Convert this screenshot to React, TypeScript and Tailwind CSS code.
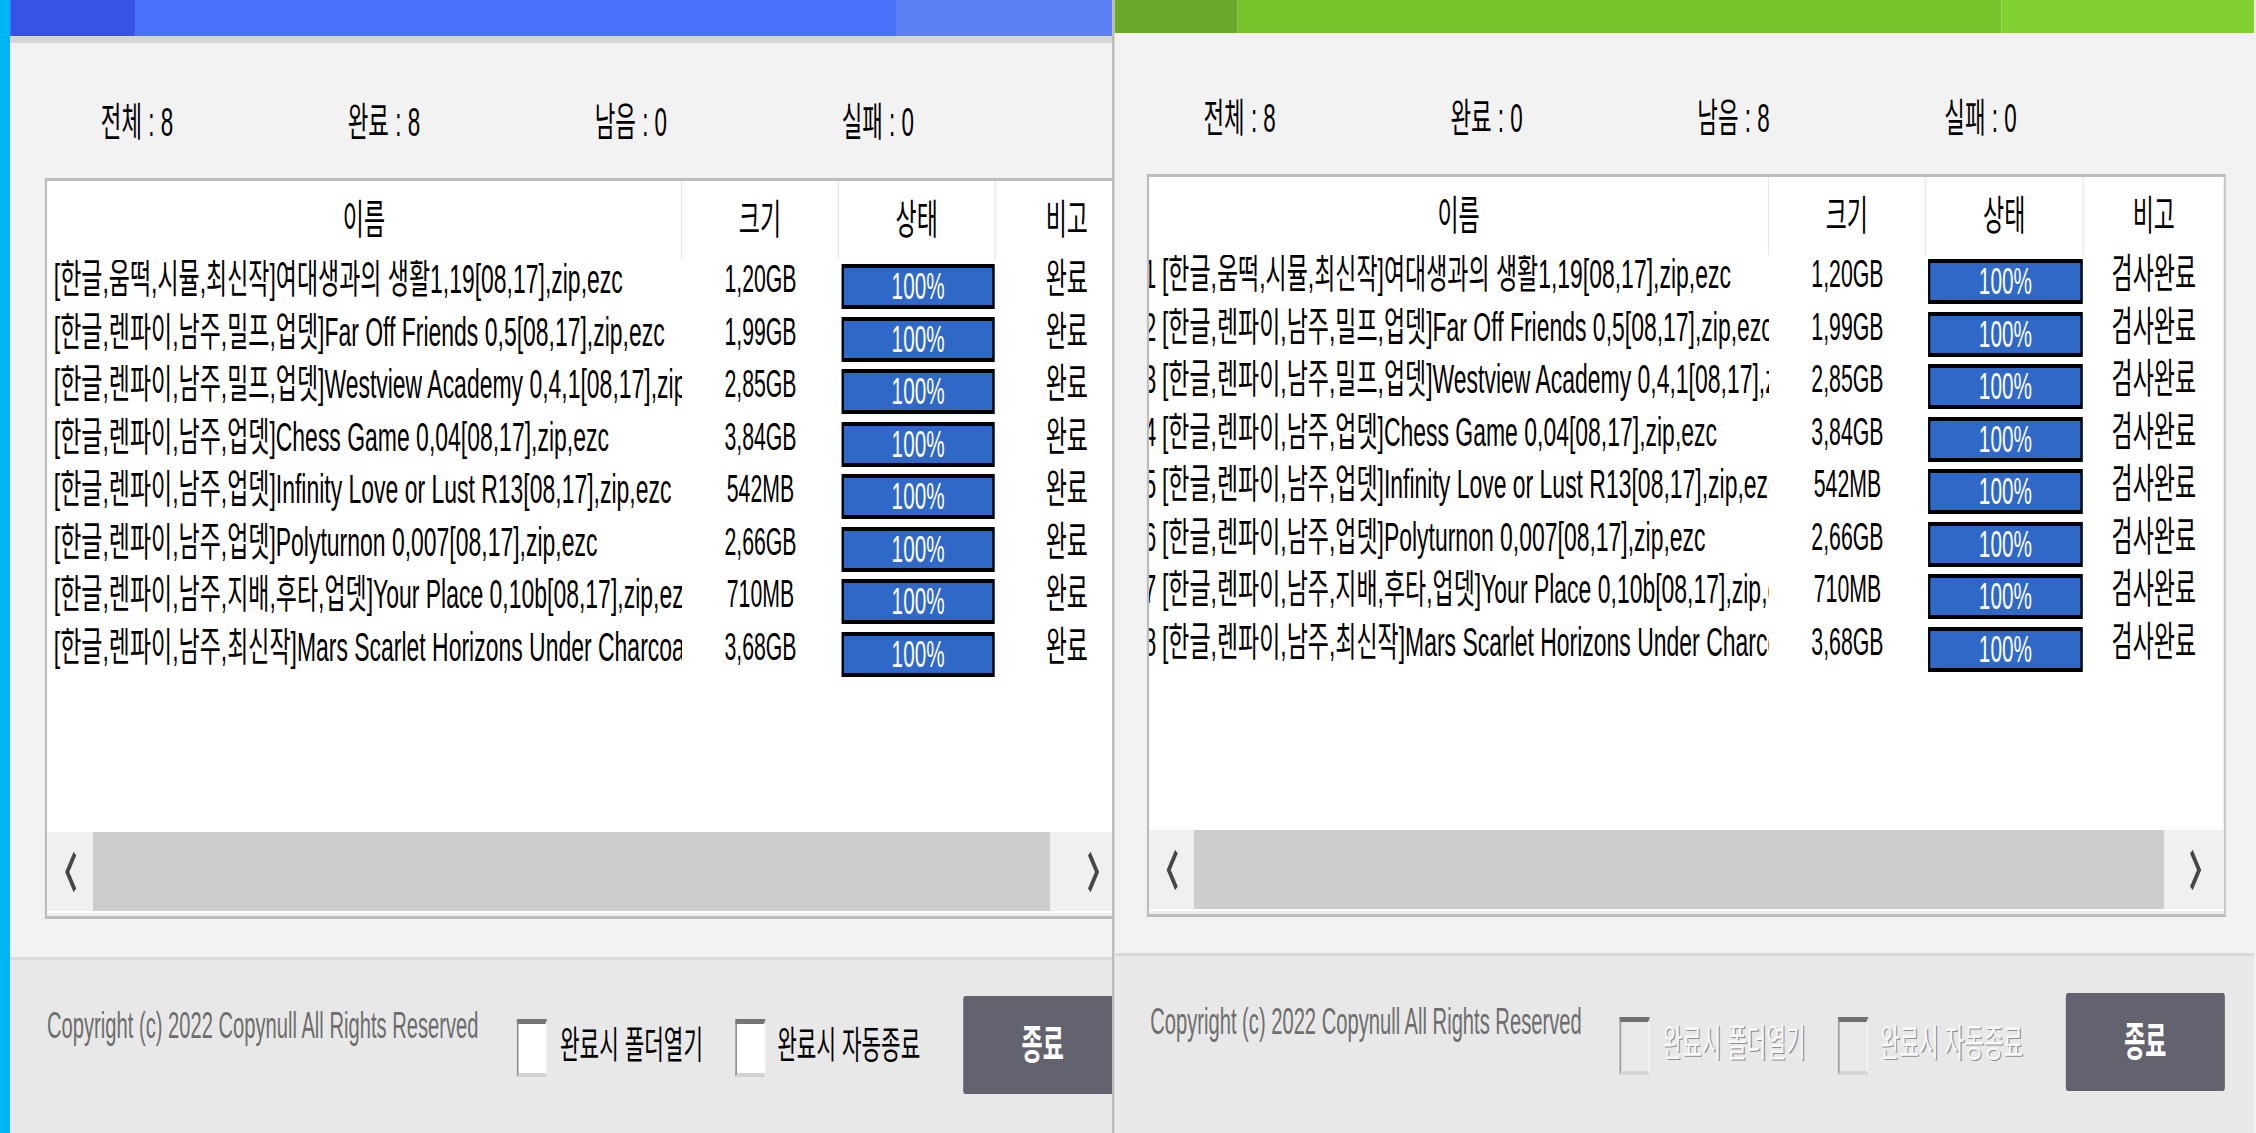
import type { ReactNode } from "react";

// The screenshot is squeezed horizontally, so the page is laid out wide and
// scaled on x by 0.56 as a whole. All widths below are in that wide space.

interface FileRow {
  name: string;
  size: string;
}

const files: FileRow[] = [
  { name: "[한글,움떡,시뮬,최신작]여대생과의 생활1,19[08,17],zip,ezc", size: "1,20GB" },
  { name: "[한글,렌파이,남주,밀프,업뎃]Far Off Friends 0,5[08,17],zip,ezc", size: "1,99GB" },
  { name: "[한글,렌파이,남주,밀프,업뎃]Westview Academy 0,4,1[08,17],zip,ezc", size: "2,85GB" },
  { name: "[한글,렌파이,남주,업뎃]Chess Game 0,04[08,17],zip,ezc", size: "3,84GB" },
  { name: "[한글,렌파이,남주,업뎃]Infinity Love or Lust R13[08,17],zip,ezc", size: "542MB" },
  { name: "[한글,렌파이,남주,업뎃]Polyturnon 0,007[08,17],zip,ezc", size: "2,66GB" },
  { name: "[한글,렌파이,남주,지배,후타,업뎃]Your Place 0,10b[08,17],zip,ezc", size: "710MB" },
  { name: "[한글,렌파이,남주,최신작]Mars Scarlet Horizons Under Charcoal Skies[08,17],zip,ezc", size: "3,68GB" },
];

function Chevron({ dir }: { dir: "left" | "right" }) {
  return (
    <svg width="27" height="40" viewBox="0 0 27 40" fill="none" stroke="#474747" strokeWidth="6" strokeLinecap="square">
      {dir === "left" ? <polyline points="20,4 8,20 20,36" /> : <polyline points="7,4 19,20 7,36" />}
    </svg>
  );
}

function Checkbox({ disabled }: { disabled?: boolean }) {
  return disabled ? (
    <div className="h-[58px] w-[54px] shrink-0 border-t-[5px] border-r-[3px] border-b-[4px] border-l-[3px] border-t-[#6f6f6f] border-r-[#f2f2f2] border-b-[#d6d6d6] border-l-[#9c9c9c] bg-[#e9e9e9]" />
  ) : (
    <div className="h-[58px] w-[54px] shrink-0 border-t-[5px] border-r-[3px] border-b-[4px] border-l-[3px] border-t-[#757575] border-r-[#f6f6f6] border-b-[#d2d2d2] border-l-[#8c8c8c] bg-white" />
  );
}

function Label({ children, disabled, className }: { children: ReactNode; disabled?: boolean; className: string }) {
  return (
    <span
      className={
        (disabled ? "text-[#f8f8f8] [text-shadow:2px_1px_0_#8f8f8f] " : "text-black ") +
        "shrink-0 whitespace-nowrap text-[38px] leading-[40px] " +
        className
      }
    >
      {children}
    </span>
  );
}

function FileTable({ right }: { right?: boolean }) {
  const nameCls = right ? "w-[1107px]" : "w-[1134px]";
  return (
    <div
      className={
        (right ? "ml-[58px] h-[743px] w-[1927px] border-r-[#c9c9c9] " : "ml-[62px] h-[741px] w-[1956px] ") +
        "flex shrink-0 flex-col border-x-[4px] border-t-[3px] border-b-[3px] border-[#bcbcbc] bg-white"
      }
    >
      <div className={(right ? "h-[78px] " : "h-[79px] ") + "flex shrink-0 text-[41px] leading-none text-black"}>
        <div className={nameCls + " flex items-center justify-center border-r-2 border-[#e4e4e4]"}>이름</div>
        <div className="flex w-[280px] items-center justify-center border-r-2 border-[#e4e4e4]">크기</div>
        <div className={(right ? "w-[282px] " : "w-[280px] ") + "flex items-center justify-center border-r-2 border-[#e4e4e4]"}>
          상태
        </div>
        <div className={(right ? "flex-1 " : "w-[254px] ") + "flex items-center justify-center"}>비고</div>
      </div>

      {files.map((f, i) => (
        <div key={i} className="flex h-[52.5px] shrink-0 text-black">
          <div className={nameCls + " overflow-hidden whitespace-nowrap pt-[2px] text-[41px] leading-[34px] " + (right ? "" : "pl-[12px]")}>
            {right && <span className="-ml-[10px] mr-[10px] inline-block">{i + 1}</span>}
            {f.name}
          </div>
          <div className="w-[280px] pt-[2px] text-center text-[38px] leading-[34px]">{f.size}</div>
          <div className={(right ? "w-[282px] pl-[4px] " : "w-[280px] pl-[5px] ") + "pr-[2px] pt-[4px]"}>
            <div className="flex h-[45px] items-center justify-center border-x-[4px] border-y-[4px] border-black bg-[#3068c7] text-[37px] leading-none text-white">
              100%
            </div>
          </div>
          <div className={(right ? "flex-1 " : "w-[254px] ") + "pt-[2px] text-center text-[41px] leading-[34px]"}>
            {right ? "검사완료" : "완료"}
          </div>
        </div>
      ))}

      <div className="flex-1" />

      <div className="flex h-[79px] shrink-0 bg-[#f0f0f0]">
        <div className={(right ? "w-[80px] " : "w-[82px] ") + "flex items-center justify-center"}>
          <Chevron dir="left" />
        </div>
        <div className={(right ? "w-[1732px] " : "w-[1709px] ") + "bg-[#cdcdcd]"} />
        <div className={(right ? "pl-[8px] " : "") + "flex flex-1 items-center justify-center"}>
          <Chevron dir="right" />
        </div>
      </div>
      <div className="h-[2px] shrink-0 bg-white" />
      <div className="h-[3px] shrink-0 bg-[#ededed]" />
    </div>
  );
}

function Footer({ right }: { right?: boolean }) {
  return (
    <div className={(right ? "h-[177px] " : "h-[173px] ") + "flex shrink-0 items-start bg-[#e8e8e8]"}>
      <span
        className={
          (right ? "ml-[64px] mt-[46px] " : "ml-[66px] mt-[46px] ") +
          "w-[839px] shrink-0 whitespace-nowrap text-[36px] leading-[40px] text-[#6d6d6d]"
        }
      >
        Copyright (c) 2022 Copynull All Rights Reserved
      </span>
      <div className={(right ? "mt-[61px] -ml-[1px] " : "mt-[59px] ") + "flex shrink-0 items-start"}>
        <Checkbox disabled={right} />
        <Label disabled={right} className="ml-[23px] mt-[6px] w-[313px]">
          완료시 폴더열기
        </Label>
        <Checkbox disabled={right} />
        <Label disabled={right} className="ml-[21px] mt-[6px] w-[332px]">
          완료시 자동종료
        </Label>
      </div>
      <button
        type="button"
        className={
          (right ? "mt-[37px] " : "mt-[36px] ") +
          "flex h-[98px] w-[284px] shrink-0 items-center justify-center rounded-[4px] bg-[#63636f] text-[41px] font-bold leading-none text-white"
        }
      >
        종료
      </button>
    </div>
  );
}

function Stats({ values, right }: { values: number[]; right?: boolean }) {
  const labels = ["전체", "완료", "남음", "실패"];
  return (
    <div className={(right ? "mt-[65px] pl-[159px] " : "mt-[59px] pl-[162px] ") + "flex h-[40px] shrink-0 text-[40px] leading-[40px] text-black"}>
      {labels.map((l, i) => (
        <span key={l} className="w-[441px] shrink-0 whitespace-nowrap">
          {l} : {values[i]}
        </span>
      ))}
    </div>
  );
}

export default function App() {
  return (
    <div className="h-[1133px] w-[2256px] overflow-hidden bg-[#f2f2f2]">
      <div className="flex h-[1133px] w-[4029px] origin-top-left scale-x-[0.56] font-['Liberation_Sans','Noto_Sans_CJK_KR',sans-serif]">
        <div className="w-[18px] shrink-0 bg-[#00b5f6]" />

        {/* done window */}
        <div className="flex w-[1968px] shrink-0 flex-col overflow-hidden bg-[#f2f2f2]">
          <div className="flex h-[36px] shrink-0">
            <div className="w-[223px] bg-[#3652e7]" />
            <div className="w-[1359px] bg-[#4a71fa]" />
            <div className="flex-1 bg-[#5b81f5]" />
          </div>
          <div className="h-[7px] shrink-0 bg-[#d5d5d5]" />
          <Stats values={[8, 8, 0, 0]} />
          <div className="mt-[36px] flex">
            <FileTable />
          </div>
          <div className="flex-1" />
          <div className="h-[3px] shrink-0 bg-[#dadada]" />
          <Footer />
        </div>

        {/* checking window */}
        <div className="flex w-[2039px] shrink-0 flex-col overflow-hidden border-l-[4px] border-[#b6b6b6] bg-[#f2f2f2]">
          <div className="flex h-[33px] shrink-0">
            <div className="w-[220px] bg-[#68a82b]" />
            <div className="w-[1364px] bg-[#75c22a]" />
            <div className="flex-1 bg-[#80d030]" />
          </div>
          <Stats values={[8, 0, 8, 0]} right />
          <div className="mt-[36px] flex">
            <FileTable right />
          </div>
          <div className="flex-1" />
          <div className="h-[3px] shrink-0 bg-[#dadada]" />
          <Footer right />
        </div>
      </div>
    </div>
  );
}
